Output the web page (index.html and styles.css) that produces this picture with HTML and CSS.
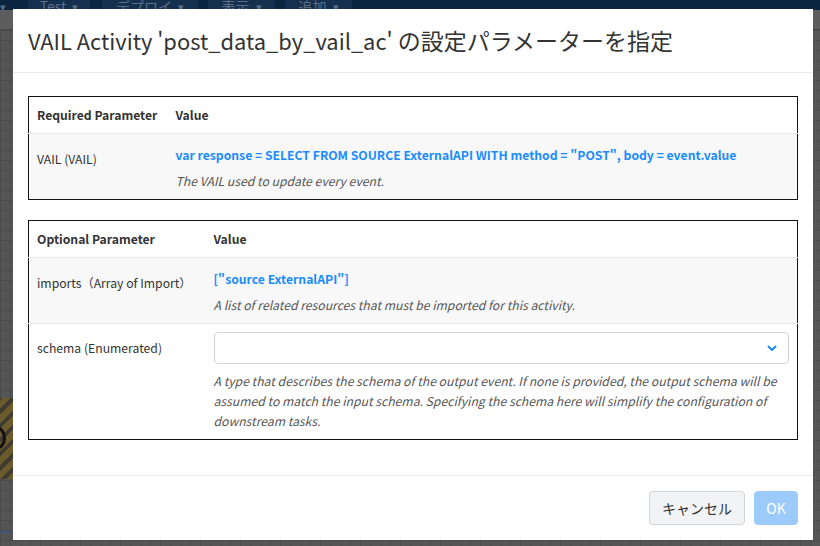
FILE: index.html
```html
<!DOCTYPE html>
<html lang="ja">
<head>
<meta charset="utf-8">
<title>VAIL Activity parameters</title>
<link rel="stylesheet" href="styles.css">
</head>
<body>
<div class="app">
  <div class="topbar">
    <div class="tb-btn tb-edge"><span class="caret">▾</span></div>
    <div class="tb-btn tb-test"><span>Test</span><span class="caret">▾</span></div>
    <div class="tb-btn tb-deploy"><span>デプロイ</span><span class="caret">▾</span></div>
    <div class="tb-btn tb-view"><span>表示</span><span class="caret">▾</span></div>
    <div class="tb-btn tb-add"><span>追加</span><span class="caret">▾</span></div>
  </div>
  <div class="subbar"></div>
  <div class="canvas">
    <div class="node"><span class="node-ring"></span></div>
    <div class="canvas-line"></div>
  </div>
</div>

<div class="modal-layer">
  <div class="modal">
    <div class="modal-header">
      <h4 class="modal-title">VAIL Activity 'post_data_by_vail_ac' <span class="cjk">の設定パラメーターを指定</span></h4>
    </div>
    <div class="modal-body">
      <table class="ptable">
        <colgroup><col class="c1a"><col></colgroup>
        <thead>
          <tr><th>Required Parameter</th><th>Value</th></tr>
        </thead>
        <tbody>
          <tr class="striped">
            <td><div class="label">VAIL (VAIL)</div></td>
            <td>
              <div class="val">var response = SELECT FROM SOURCE ExternalAPI WITH method = "POST", body = event.value</div>
              <div class="desc">The VAIL used to update every event.</div>
            </td>
          </tr>
        </tbody>
      </table>

      <table class="ptable">
        <colgroup><col class="c1b"><col></colgroup>
        <thead>
          <tr><th>Optional Parameter</th><th>Value</th></tr>
        </thead>
        <tbody>
          <tr class="striped">
            <td><div class="label">imports（Array of Import）</div></td>
            <td>
              <div class="val">["source ExternalAPI"]</div>
              <div class="desc">A list of related resources that must be imported for this activity.</div>
            </td>
          </tr>
          <tr>
            <td><div class="label label-sel">schema (Enumerated)</div></td>
            <td>
              <div class="select">
                <svg class="chev" width="10" height="7" viewBox="0 0 10 7"><polyline points="1.5,1.5 5,5 8.5,1.5" fill="none" stroke="#1a8cff" stroke-width="2" stroke-linecap="round" stroke-linejoin="round"/></svg>
              </div>
              <div class="desc desc-sel">A type that describes the schema of the output event. If none is provided, the output schema will be assumed to match the input schema. Specifying the schema here will simplify the configuration of downstream tasks.</div>
            </td>
          </tr>
        </tbody>
      </table>
    </div>
    <div class="modal-footer">
      <button class="btn btn-default">キャンセル</button>
      <button class="btn btn-primary" disabled>OK</button>
    </div>
  </div>
</div>
</body>
</html>
```

FILE: styles.css
```css
* { box-sizing: border-box; }
html, body {
  margin: 0;
  width: 820px;
  height: 546px;
  overflow: hidden;
  font-family: "Noto Sans CJK JP", "Noto Sans", sans-serif;
  background: #545454;
}

/* ---------- dimmed application behind the dialog ---------- */
.app {
  display: flex;
  flex-direction: column;
  height: 546px;
}
.topbar {
  height: 10px;
  background: #0b2440;
  display: flex;
  overflow: hidden;
}
.tb-btn {
  height: 10px;
  background: #15304f;
  color: #5d6f87;
  display: flex;
  align-items: flex-end;
  justify-content: center;
  gap: 6px;
  font-size: 14px;
  line-height: 14px;
  overflow: hidden;
  margin-right: 10px;
}
.tb-btn span { position: relative; top: 3px; }
.tb-btn .caret { font-size: 11px; }
.tb-edge { width: 18px; background: #0b2440; justify-content: flex-start; margin-right: 10px; }
.tb-test { width: 62px; margin-right: 12px; }
.tb-deploy { width: 96px; }
.tb-view { width: 67px; }
.tb-add { width: 67px; }

.subbar {
  height: 20px;
  background: #5d5d5d;
  border-bottom: 1px solid #454545;
}
.canvas {
  position: relative;
  flex: 1;
  background-color: #555555;
  background-image:
    linear-gradient(#4b4b4b 1px, transparent 1px),
    linear-gradient(90deg, #4b4b4b 1px, transparent 1px);
  background-size: 10px 10px;
}
.node {
  position: absolute;
  left: -40px;
  top: 368px;
  width: 54px;
  height: 81px;
  background: repeating-linear-gradient(135deg, #6a5a2c 0 6px, #403b30 6px 10px);
  overflow: hidden;
}
.node-ring {
  position: absolute;
  left: 26px;
  top: 28px;
  width: 20px;
  height: 24px;
  border: 3px solid #111;
  border-radius: 50%;
}
.canvas-line {
  position: absolute;
  left: 0;
  top: 502px;
  width: 13px;
  height: 1px;
  background: #2c5a98;
}

/* ---------- modal ---------- */
.modal-layer {
  position: fixed;
  inset: 0;
  display: flex;
  align-items: flex-start;
  padding: 9px 0 0 13px;
}
.modal {
  width: 800px;
  background: #fff;
  color: #333;
}
.modal-header {
  padding: 15px 15px;
  border-bottom: 1px solid #ececec;
}
.modal-title {
  margin: 0;
  font-size: 21.9px;
  line-height: 33px;
  font-weight: 400;
  color: #333;
  white-space: nowrap;
}
.modal-title .cjk { font-size: 23px; }
.modal-body {
  padding: 23px 15px 15px;
}
.ptable {
  width: 100%;
  border-collapse: collapse;
  border: 1px solid #111;
  margin-bottom: 20px;
  font-size: 12.2px;
  line-height: 20px;
}
.c1a { width: 139px; }
.c1b { width: 177px; }
.ptable th {
  text-align: left;
  font-weight: 700;
  padding: 8px;
  color: #333;
  white-space: nowrap;
}
.ptable td {
  vertical-align: top;
  padding: 8px;
  border-top: 1px solid #e8e8e8;
}
.ptable tr.striped td { background: #f8f8f8; }
.label {
  padding-top: 7px;
  color: #333;
  white-space: nowrap;
}
.label-sel { padding-top: 6px; }
.val {
  padding-top: 3px;
  color: #1a8cff;
  font-weight: 700;
}
.desc {
  margin-top: 6px;
  font-style: italic;
  color: #555;
}
.select {
  height: 32px;
  border: 1px solid #cfd3d9;
  border-radius: 4px;
  display: flex;
  align-items: center;
  justify-content: flex-end;
  padding-right: 11px;
  background: #fff;
}
.chev { display: block; }
.desc-sel { margin-top: 7px; }

.modal-footer {
  border-top: 1px solid #ececec;
  padding: 15px;
  display: flex;
  justify-content: flex-end;
  gap: 9px;
}
.btn {
  font-family: inherit;
  font-size: 14px;
  line-height: 20px;
  height: 34px;
  padding: 0 12px;
  border-radius: 4px;
  border: 1px solid #d3d5d8;
  white-space: nowrap;
}
.btn-default {
  background: #f2f3f5;
  color: #333;
}
.btn-primary {
  background: #9ccbfb;
  border-color: #9ccbfb;
  color: #fff;
  width: 44px;
  padding: 0;
}
```
